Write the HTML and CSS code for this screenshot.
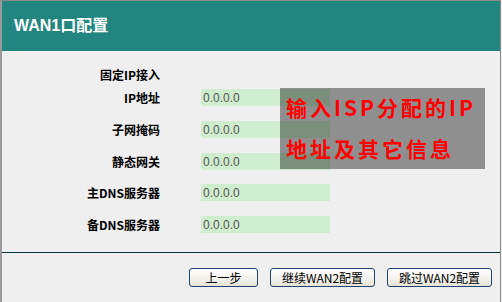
FILE: index.html
```html
<!DOCTYPE html>
<html lang="zh-CN">
<head>
    <meta charset="UTF-8">
    <title>WAN1口配置</title>
    <link rel="stylesheet" href="styles.css">
</head>
<body>
    <div class="panel">
        <div class="title">WAN1口配置</div>
        <div class="form">
            <div class="row first">
                <label>固定IP接入</label>
            </div>
            <div class="row">
                <label for="ip">IP地址</label>
                <input type="text" id="ip" value="0.0.0.0">
            </div>
            <div class="row">
                <label for="mask">子网掩码</label>
                <input type="text" id="mask" value="0.0.0.0">
            </div>
            <div class="row">
                <label for="gw">静态网关</label>
                <input type="text" id="gw" value="0.0.0.0">
            </div>
            <div class="row">
                <label for="dns1">主DNS服务器</label>
                <input type="text" id="dns1" value="0.0.0.0">
            </div>
            <div class="row">
                <label for="dns2">备DNS服务器</label>
                <input type="text" id="dns2" value="0.0.0.0">
            </div>
            <div class="note">
                <p>输入ISP分配的IP</p>
                <p>地址及其它信息</p>
            </div>
        </div>
        <div class="actions">
            <button class="btn small">上一步</button>
            <button class="btn">继续WAN2配置</button>
            <button class="btn">跳过WAN2配置</button>
        </div>
    </div>
</body>
</html>
```

FILE: styles.css
```css
*
{
    margin: 0;
    padding: 0;
    box-sizing: border-box;
}
body
{
    background-color: #efefef;
    font-family: "Noto Sans CJK SC", sans-serif;
}
.panel
{
    width: 501px;
    height: 302px;
    border-top: 1px solid #8a8a8a;
    border-left: 2px solid #9a9a9a;
    border-right: 1px solid #8a8a8a;
    display: flex;
    flex-direction: column;
}
.title
{
    height: 50px;
    background-color: #238580;
    color: white;
    font-family: "Liberation Sans", "Noto Sans CJK SC", sans-serif;
    font-weight: bold;
    font-size: 16px;
    line-height: 50px;
    padding-left: 12px;
}
.form
{
    position: relative;
    display: flex;
    flex-direction: column;
    gap: 14.75px;
    padding-top: 15px;
    height: 201px;
}
.row
{
    display: flex;
    align-items: center;
    height: 17px;
}
.row.first
{
    margin-bottom: -8.75px;
}
label
{
    width: 158px;
    text-align: right;
    font-size: 12px;
    font-weight: bold;
    color: #000;
    margin-right: 41px;
}
input
{
    width: 129px;
    height: 17px;
    border: none;
    outline: none;
    background-color: #cfedcf;
    color: #555;
    font-family: "Liberation Sans", sans-serif;
    font-size: 12px;
    padding: 1px 2px 0;
}
.note
{
    position: absolute;
    left: 278px;
    top: 37px;
    width: 205px;
    height: 81px;
    background-color: rgba(0, 0, 0, 0.4);
    color: #ff0000;
    font-size: 21px;
    font-weight: bold;
    letter-spacing: 3px;
    padding: 3px 0 0 6px;
}
.note p
{
    height: 42px;
    line-height: 32px;
}
.note p + p
{
    line-height: 30px;
}
.actions
{
    border-top: 1px solid #033333;
    display: flex;
    justify-content: flex-end;
    gap: 12px;
    padding: 15px 8px 0 0;
    flex: 1;
}
.btn
{
    width: 105px;
    height: 19px;
    border: 1px solid #1c4474;
    border-radius: 3px;
    background: linear-gradient(#ffffff, #f3f1ea 60%, #e6e2d6);
    font-family: "Noto Sans CJK SC", sans-serif;
    font-size: 12px;
    color: #000;
    line-height: 16px;
}
.btn.small
{
    width: 69px;
}
```
